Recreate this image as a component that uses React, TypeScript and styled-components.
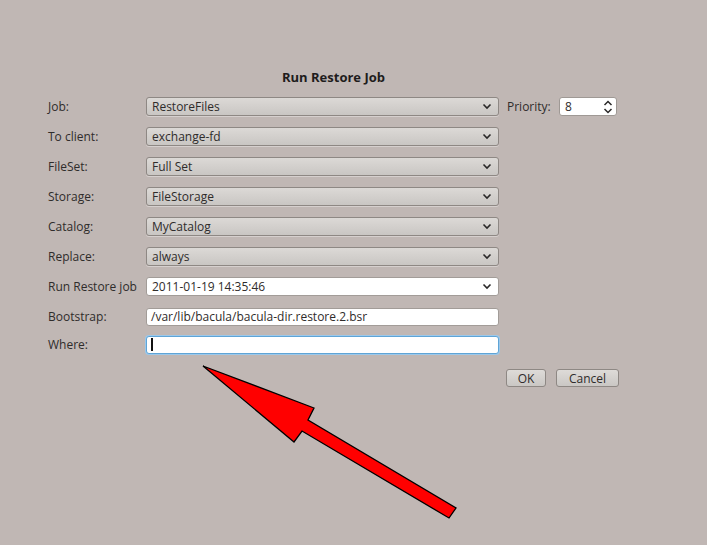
import React from "react";
import styled, { createGlobalStyle } from "styled-components";

const Global = createGlobalStyle`
  html, body { margin: 0; padding: 0; background: #c0b7b4; }
  body { font-family: "Open Sans", "DejaVu Sans", sans-serif; font-size: 12px; color: #2f2c2b; }
`;

const Page = styled.div`
  position: relative;
  width: 707px;
  height: 545px;
  overflow: hidden;
  box-sizing: border-box;
  padding: 68px 0 0 48px;
`;

const Title = styled.div`
  width: 571px;
  text-align: center;
  font-weight: 700;
  font-size: 13px;
  line-height: 18px;
  color: #1e1c1c;
  margin-bottom: 11px;
`;

const Form = styled.div`
  display: flex;
  flex-direction: column;
  gap: 11px;
`;

const Row = styled.div<{ $shift?: number }>`
  display: flex;
  align-items: center;
  height: 19px;
  margin-top: ${(p) => p.$shift ?? 0}px;
`;

const Label = styled.div`
  width: 98px;
  flex: none;
  white-space: nowrap;
`;

const Combo = styled.div<{ $editable?: boolean }>`
  box-sizing: border-box;
  width: 353px;
  height: 19px;
  display: flex;
  align-items: center;
  justify-content: space-between;
  padding: 0 6px 0 5px;
  border: 1px solid ${(p) => (p.$editable ? "#a29c98" : "#8e8884")};
  border-radius: 3px;
  background: ${(p) =>
    p.$editable ? "#ffffff" : "linear-gradient(#dcd9d6, #c9c6c3)"};
  box-shadow: ${(p) => (p.$editable ? "none" : "0 1px 0 rgba(255,255,255,0.35)")};
`;

const Field = styled.div<{ $focus?: boolean }>`
  box-sizing: border-box;
  width: 353px;
  height: 18px;
  display: flex;
  align-items: center;
  padding: 0 4px;
  background: #fff;
  border: 1px solid ${(p) => (p.$focus ? "#5fa4d6" : "#a29c98")};
  box-shadow: ${(p) => (p.$focus ? "0 0 0 1px #9cc8ea" : "none")};
  border-radius: 3px;
`;

const Caret = styled.span`
  display: inline-block;
  width: 2px;
  height: 13px;
  background: #111;
`;

const PriorityLabel = styled.div`
  margin-left: 8px;
  width: 52px;
`;

const Spin = styled.div`
  box-sizing: border-box;
  width: 58px;
  height: 19px;
  display: flex;
  align-items: center;
  justify-content: space-between;
  padding: 0 3px 0 5px;
  background: #fff;
  border: 1px solid #9f9995;
  border-radius: 3px;
`;

const Buttons = styled.div`
  display: flex;
  gap: 10px;
  margin: 15px 0 0 458px;
`;

const Button = styled.div<{ $w: number }>`
  box-sizing: border-box;
  width: ${(p) => p.$w}px;
  height: 18px;
  display: flex;
  align-items: center;
  justify-content: center;
  border: 1px solid #8e8884;
  border-radius: 3px;
  background: linear-gradient(#dedbd8, #cac7c4);
`;

const Overlay = styled.svg`
  position: absolute;
  left: 0;
  top: 0;
  pointer-events: none;
`;

const Chevron = () => (
  <svg width="10" height="7" viewBox="0 0 10 7">
    <path d="M1.5 1.5 L5 5 L8.5 1.5" fill="none" stroke="#2a2828" strokeWidth="1.6" />
  </svg>
);

const UpDown = () => (
  <svg width="10" height="14" viewBox="0 0 10 14">
    <path d="M1.5 5 L5 1.5 L8.5 5 M1.5 9 L5 12.5 L8.5 9" fill="none" stroke="#2a2828" strokeWidth="1.5" />
  </svg>
);

const combos: [string, string][] = [
  ["To client:", "exchange-fd"],
  ["FileSet:", "Full Set"],
  ["Storage:", "FileStorage"],
  ["Catalog:", "MyCatalog"],
  ["Replace:", "always"],
];

export default function App() {
  return (
    <>
      <Global />
      <Page>
        <Title>Run Restore Job</Title>
        <Form>
          <Row>
            <Label>Job:</Label>
            <Combo>
              <span>RestoreFiles</span>
              <Chevron />
            </Combo>
            <PriorityLabel>Priority:</PriorityLabel>
            <Spin>
              <span>8</span>
              <UpDown />
            </Spin>
          </Row>
          {combos.map(([l, v]) => (
            <Row key={l}>
              <Label>{l}</Label>
              <Combo>
                <span>{v}</span>
                <Chevron />
              </Combo>
            </Row>
          ))}
          <Row>
            <Label>Run Restore job</Label>
            <Combo $editable>
              <span>2011-01-19 14:35:46</span>
              <Chevron />
            </Combo>
          </Row>
          <Row>
            <Label>Bootstrap:</Label>
            <Field>/var/lib/bacula/bacula-dir.restore.2.bsr</Field>
          </Row>
          <Row $shift={-2}>
            <Label>Where:</Label>
            <Field $focus>
              <Caret />
            </Field>
          </Row>
        </Form>
        <Buttons>
          <Button $w={40}>OK</Button>
          <Button $w={63}>Cancel</Button>
        </Buttons>
        <Overlay width="707" height="545" viewBox="0 0 707 545">
          <polygon
            points="203,366 314,408 308,420 456,508 449,518 302,431 294,442"
            fill="#ff0000"
            stroke="#000"
            strokeWidth="1.3"
            strokeLinejoin="miter"
          />
        </Overlay>
      </Page>
    </>
  );
}
